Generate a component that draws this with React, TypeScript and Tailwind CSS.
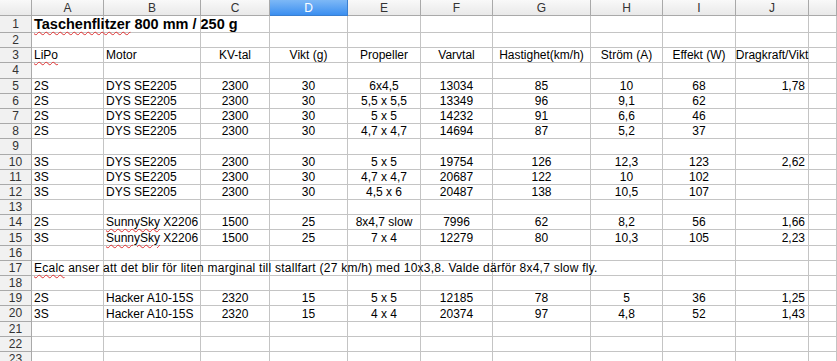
import React from 'react';

const cols = ['A', 'B', 'C', 'D', 'E', 'F', 'G', 'H', 'I', 'J', ''];

type Cell = string | { t: string; wavy?: string; rest?: string };

// data rows keyed by row number; index 0 = column A
const rows: Record<number, Cell[]> = {
  3: [{ t: '', wavy: 'LiPo' }, 'Motor', 'KV-tal', 'Vikt (g)', 'Propeller', 'Varvtal', 'Hastighet(km/h)', 'Ström (A)', 'Effekt (W)', 'Dragkraft/Vikt'],
  5: ['2S', 'DYS SE2205', '2300', '30', '6x4,5', '13034', '85', '10', '68', '1,78'],
  6: ['2S', 'DYS SE2205', '2300', '30', '5,5 x 5,5', '13349', '96', '9,1', '62', ''],
  7: ['2S', 'DYS SE2205', '2300', '30', '5 x 5', '14232', '91', '6,6', '46', ''],
  8: ['2S', 'DYS SE2205', '2300', '30', '4,7 x 4,7', '14694', '87', '5,2', '37', ''],
  10: ['3S', 'DYS SE2205', '2300', '30', '5 x 5', '19754', '126', '12,3', '123', '2,62'],
  11: ['3S', 'DYS SE2205', '2300', '30', '4,7 x 4,7', '20687', '122', '10', '102', ''],
  12: ['3S', 'DYS SE2205', '2300', '30', '4,5 x 6', '20487', '138', '10,5', '107', ''],
  14: ['2S', { t: '', wavy: 'SunnySky', rest: ' X2206' }, '1500', '25', '8x4,7 slow', '7996', '62', '8,2', '56', '1,66'],
  15: ['3S', { t: '', wavy: 'SunnySky', rest: ' X2206' }, '1500', '25', '7 x 4', '12279', '80', '10,3', '105', '2,23'],
  19: ['2S', 'Hacker A10-15S', '2320', '15', '5 x 5', '12185', '78', '5', '36', '1,25'],
  20: ['3S', 'Hacker A10-15S', '2320', '15', '4 x 4', '20374', '97', '4,8', '52', '1,43'],
};

const gridCols = 'grid grid-cols-[32px_72px_97px_69px_78px_73px_72px_98px_72px_73px_73px_1fr]';

const Wavy = ({ children }: { children: React.ReactNode }) => (
  <span className="underline decoration-wavy decoration-[#e03030] decoration-1 underline-offset-2">{children}</span>
);

const renderCell = (c: Cell | undefined) => {
  if (c === undefined) return null;
  if (typeof c === 'string') return c;
  return (
    <>
      {c.t}
      {c.wavy && <Wavy>{c.wavy}</Wavy>}
      {c.rest}
    </>
  );
};

const align = (i: number, row: number) => {
  if (i <= 1) return 'justify-start pl-[2px]';
  if (i === 9 && row !== 3) return 'justify-end pr-[3px]';
  return 'justify-center';
};

const Row = ({ n }: { n: number }) => {
  const data = rows[n];
  const h = n === 1 ? 'h-[17px]' : 'h-[15.2px]';
  return (
    <>
      <div className={`${h} flex items-center justify-center bg-[#f1f1f1] border-r border-b border-[#a9a9a9] text-[12px] text-[#333]`}>
        {n}
      </div>
      {cols.map((_, i) => {
        let content: React.ReactNode = null;
        let cls = align(i, n);
        if (n === 1 && i === 0) {
          content = (
            <span className="font-bold text-[14.5px]">
              <Wavy>Taschenflitzer</Wavy> 800 mm / 250 g
            </span>
          );
          cls = 'justify-start pl-[2px]';
        } else if (n === 17 && i === 0) {
          content = (
            <span className="tracking-[0.25px]">
              <Wavy>Ecalc</Wavy> anser att det blir för liten marginal till stallfart (27 km/h) med 10x3,8. Valde därför 8x4,7 slow fly.
            </span>
          );
          cls = 'justify-start pl-[2px]';
        } else if (data) {
          content = renderCell(data[i]);
        }
        return (
          <div
            key={i}
            className={`${h} relative flex items-end pb-[1px] whitespace-nowrap overflow-visible border-r border-b border-[#c4c4c4] ${cls}`}
          >
            <span className="relative z-10">{content}</span>
          </div>
        );
      })}
    </>
  );
};

export default function App() {
  return (
    <div
      className="w-[837px] h-[361px] overflow-hidden bg-white text-black text-[12px] leading-none"
      style={{ fontFamily: '"Liberation Sans", Arial, sans-serif' }}
    >
      <div className={gridCols}>
        {/* column headers */}
        <div className="h-[16px] bg-gradient-to-b from-[#f9f9f9] to-[#e9e9e9] border-r border-b border-[#a9a9a9]" />
        {cols.map((c, i) =>
          c === 'D' ? (
            <div
              key={i}
              className="h-[16px] flex items-center justify-center bg-gradient-to-b from-[#7db8f6] to-[#3a8ff0] border-r border-b border-[#3a7fd0] text-white text-[12px]"
            >
              {c}
            </div>
          ) : (
            <div
              key={i}
              className="h-[16px] flex items-center justify-center bg-gradient-to-b from-[#f9f9f9] to-[#e9e9e9] border-r border-b border-[#a9a9a9] text-[#333] text-[12px]"
            >
              {c}
            </div>
          )
        )}
        {Array.from({ length: 23 }, (_, k) => (
          <Row key={k} n={k + 1} />
        ))}
      </div>
    </div>
  );
}
